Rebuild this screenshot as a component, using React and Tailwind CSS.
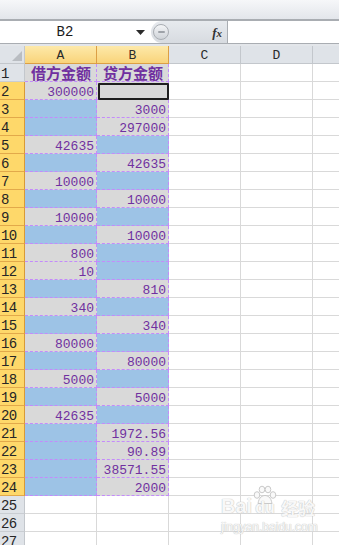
import React from "react";

const data = [
  ["300000", ""],
  [null, "3000"],
  [null, "297000"],
  ["42635", null],
  [null, "42635"],
  ["10000", null],
  [null, "10000"],
  ["10000", null],
  [null, "10000"],
  ["800", null],
  ["10", null],
  [null, "810"],
  ["340", null],
  [null, "340"],
  ["80000", null],
  [null, "80000"],
  ["5000", null],
  [null, "5000"],
  ["42635", null],
  [null, "1972.56"],
  [null, "90.89"],
  [null, "38571.55"],
  [null, "2000"],
];

const mono = { fontFamily: '"Liberation Mono", "DejaVu Sans Mono", monospace' };
const cjk = { fontFamily: '"Noto Sans CJK SC", "Noto Sans", sans-serif' };
const wmShadow = "0 0 1px #c4c4c4, 0 0 1px #c4c4c4";

function Dashes() {
  return (
    <>
      <span className="absolute left-0 right-0 bottom-0 h-[1px] border-b border-dashed border-[#c48bfb]" />
      <span className="absolute top-0 bottom-0 right-0 w-[1px] border-r border-dashed border-[#c48bfb]" />
    </>
  );
}

function RowHead({ n, sel }) {
  return (
    <div
      className={
        "flex items-start overflow-hidden pl-[1px] pt-[4px] text-[14px] leading-[13px] tracking-[-0.6px] text-[#262626] border-r border-b " +
        (sel
          ? "bg-[#fed86a] border-r-[#d99a36] border-b-[#e2a94a]"
          : "bg-[#dfe3e8] border-r-[#c3c7cc] border-b-[#c9cdd2]")
      }
      style={mono}
    >
      {n}
    </div>
  );
}

function DataCell({ v, active }) {
  const blue = v === null;
  return (
    <div
      className={
        "relative flex items-start justify-end overflow-hidden pr-[3px] pt-[5px] text-[13px] leading-[12px] text-[#7030a0] " +
        (blue ? "bg-[#9dc3e6]" : "bg-[#d9d9d9]")
      }
      style={mono}
    >
      {v}
      <Dashes />
      {active && (
        <span className="absolute left-[1px] top-[1px] right-0 bottom-0 border-2 border-[#1f1f1f] rounded-[1px]" />
      )}
    </div>
  );
}

function EmptyCell({ last }) {
  return <div className={"bg-white border-b border-[#d9d9d9] " + (last ? "" : "border-r")} />;
}

const rowCls = "grid grid-cols-[25px_72px_72px_72px_72px_1fr] grid-rows-[18px] h-[18px]";

export default function App() {
  const rows = [];
  rows.push(
    <div key="r1" className={rowCls}>
      <RowHead n={1} sel={false} />
      {["借方金额", "贷方金额"].map((t) => (
        <div
          key={t}
          className="relative flex items-center justify-center bg-[#d9d9d9] text-[15px] leading-[16px] font-bold text-[#7030a0]"
          style={cjk}
        >
          <span className="block h-[16px]">{t}</span>
          <Dashes />
        </div>
      ))}
      <EmptyCell />
      <EmptyCell />
      <EmptyCell last />
    </div>
  );
  data.forEach((r, i) => {
    rows.push(
      <div key={"r" + (i + 2)} className={rowCls}>
        <RowHead n={i + 2} sel />
        <DataCell v={r[0]} />
        <DataCell v={r[1]} active={i === 0} />
        <EmptyCell />
        <EmptyCell />
        <EmptyCell last />
      </div>
    );
  });
  [25, 26, 27].forEach((n) => {
    rows.push(
      <div key={"r" + n} className={rowCls}>
        <RowHead n={n} sel={false} />
        <EmptyCell />
        <EmptyCell />
        <EmptyCell />
        <EmptyCell />
        <EmptyCell last />
      </div>
    );
  });

  return (
    <div className="relative w-[339px] h-[545px] overflow-hidden bg-white" style={mono}>
      {/* ribbon bottom strip */}
      <div className="h-[19px] bg-linear-to-b from-[#f6f7f9] to-[#e3e6eb]" />
      {/* formula bar */}
      <div className="flex h-[25px] border-t-2 border-b border-[#a9adb2] bg-white">
        <div className="flex w-[151px] items-center">
          <div className="w-[130px] text-center text-[14px] leading-none text-[#1a1a1a]" style={mono}>
            B2
          </div>
          <svg width="9" height="5" viewBox="0 0 9 5" className="ml-[6px] mt-[1px]">
            <path d="M0 0 H9 L4.5 5 Z" fill="#2b2b2b" />
          </svg>
        </div>
        <div className="flex w-[76px] items-center rounded-l-full bg-linear-to-b from-[#e7eaee] to-[#d7dbe0]">
          <div className="ml-[2px] flex h-[16px] w-[16px] items-center justify-center rounded-full border border-[#a9adb3] bg-linear-to-b from-[#f4f5f7] to-[#cfd3d8]">
            <div className="h-[2px] w-[7px] rounded-full bg-[#9ea2a8]" />
          </div>
          <div
            className="ml-auto mr-[5px] text-[13px] font-bold italic leading-none text-[#333]"
            style={{ fontFamily: '"Liberation Serif", serif' }}
          >
            f<span className="text-[11px]">x</span>
          </div>
        </div>
        <div className="flex-1 border-l border-[#a9adb2] bg-white" />
      </div>
      <div className="h-[2px] bg-[#e3e6ea]" />
      {/* column headers */}
      <div className={rowCls}>
        <div className="relative bg-[#dfe3e8] border-r border-b border-[#c3c7cc]">
          <svg width="10" height="10" viewBox="0 0 10 10" className="absolute right-[2px] bottom-[2px]">
            <path d="M10 0 V10 H0 Z" fill="#b9bdc2" />
          </svg>
        </div>
        {["A", "B"].map((c) => (
          <div
            key={c}
            className="flex items-center justify-center pt-[1px] text-[13px] leading-none text-[#2a2a2a] bg-linear-to-b from-[#fde9a9] to-[#f9d47a] border-r border-b border-[#dc9f45]"
          >
            {c}
          </div>
        ))}
        {["C", "D"].map((c) => (
          <div
            key={c}
            className="flex items-center justify-center pt-[1px] text-[13px] leading-none text-[#2a2a2a] bg-[#dfe3e8] border-r border-b border-[#c3c7cc]"
          >
            {c}
          </div>
        ))}
        <div className="bg-[#dfe3e8] border-b border-[#c3c7cc]" />
      </div>
      {rows}

      {/* watermark */}
      <div className="pointer-events-none absolute left-[221px] top-[485px] flex flex-col items-start">
        <div className="flex items-end">
          <span
            className="text-[20px] font-bold leading-none text-[#f8f8f8]"
            style={{ fontFamily: '"Liberation Sans", Arial, sans-serif', textShadow: wmShadow }}
          >
            Bai
          </span>
          <span className="relative flex flex-col items-center">
            <svg width="26" height="19" viewBox="0 0 26 19" className="mb-[-4px]">
              <g fill="#f9f9f9" stroke="#cacaca" strokeWidth="1">
                <ellipse cx="5" cy="10" rx="2.8" ry="3.3" />
                <ellipse cx="10" cy="4.5" rx="2.8" ry="3.3" />
                <ellipse cx="16" cy="4.5" rx="2.8" ry="3.3" />
                <ellipse cx="21" cy="10" rx="2.8" ry="3.3" />
                <path d="M6 18.5 C7 12 10.5 10.5 13 10.5 C15.5 10.5 19 12 20 18.5 Z" />
              </g>
            </svg>
            <span
              className="text-[16px] font-bold leading-none text-[#f8f8f8]"
              style={{ fontFamily: '"Liberation Sans", Arial, sans-serif', textShadow: wmShadow }}
            >
              du
            </span>
          </span>
          <span
            className="ml-[3px] text-[17px] font-bold leading-none text-[#f8f8f8]"
            style={{ ...cjk, textShadow: wmShadow }}
          >
            经验
          </span>
        </div>
        <div
          className="mt-[5px] text-[12px] leading-none text-[#f8f8f8]"
          style={{ fontFamily: '"Liberation Sans", Arial, sans-serif', textShadow: wmShadow }}
        >
          jingyan.baidu.com
        </div>
      </div>
    </div>
  );
}
